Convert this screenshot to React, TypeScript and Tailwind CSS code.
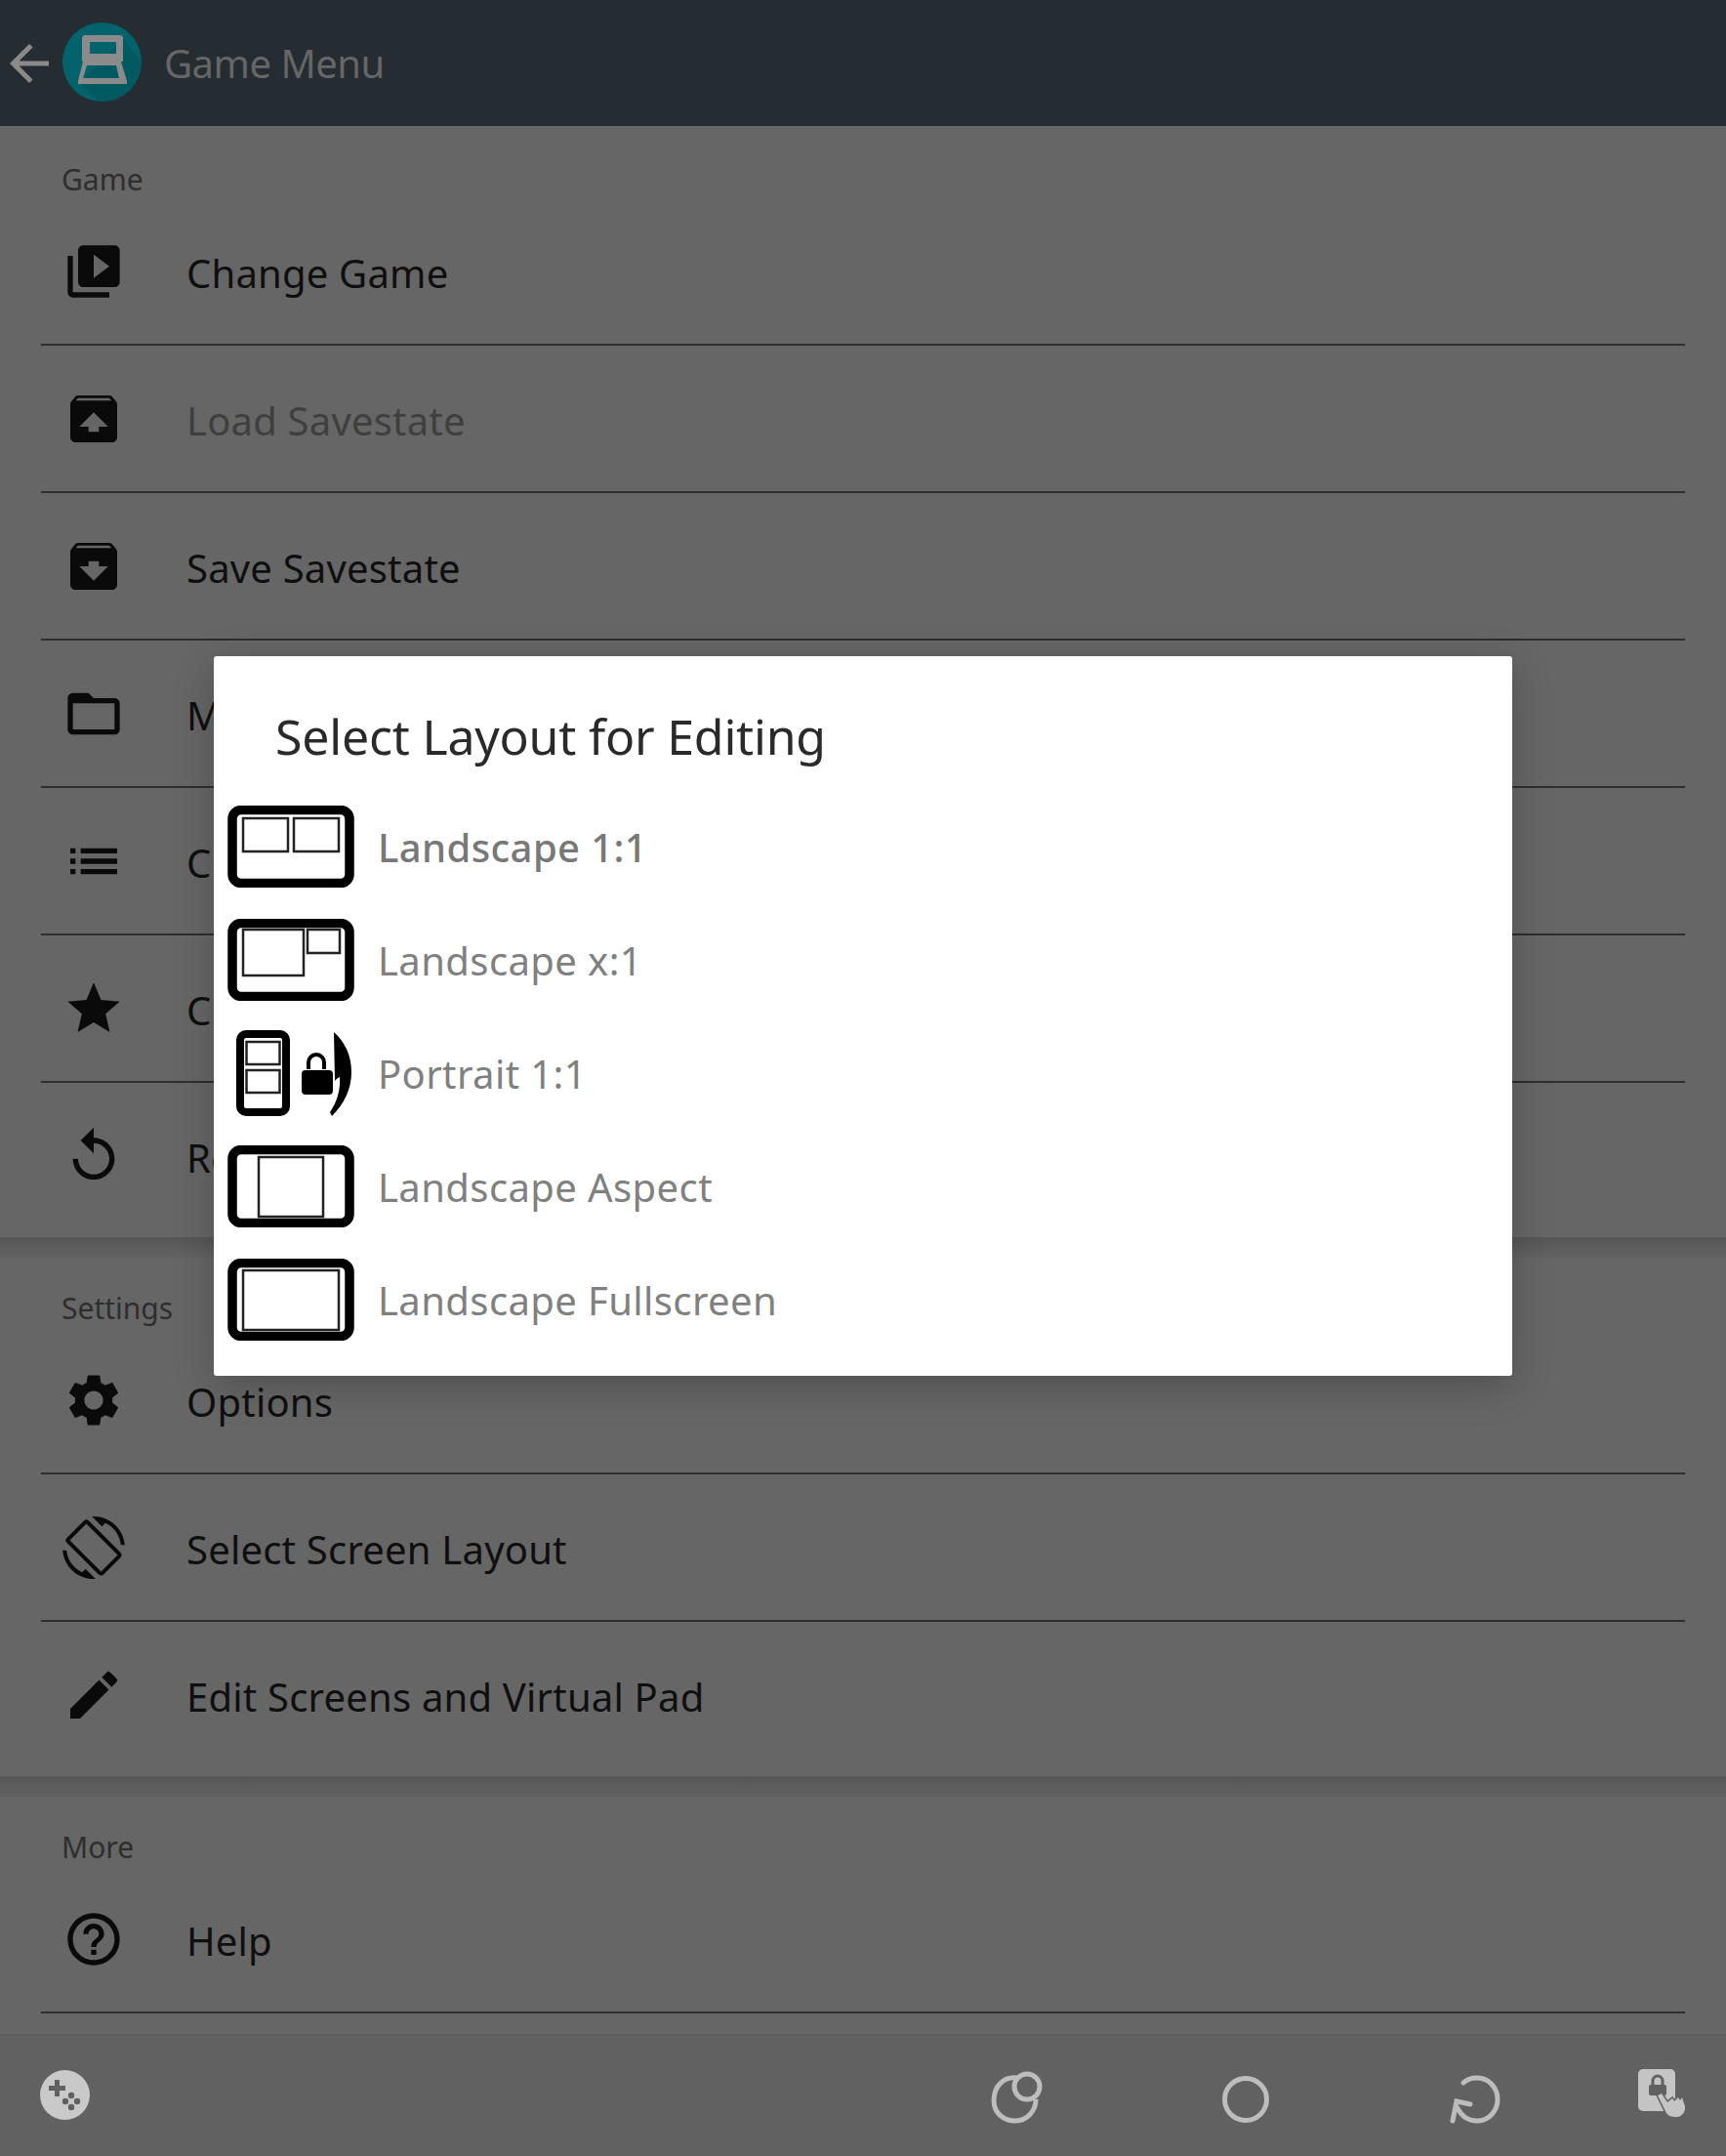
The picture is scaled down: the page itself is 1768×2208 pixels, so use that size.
import { ReactNode } from "react";
import {
  MdArchive,
  MdArrowBack,
  MdEdit,
  MdFolderOpen,
  MdHelpOutline,
  MdList,
  MdReplay,
  MdScreenRotation,
  MdSettings,
  MdStar,
  MdUnarchive,
  MdVideoLibrary,
} from "react-icons/md";

type RowProps = { icon: ReactNode; label: string; disabled?: boolean; last?: boolean };

const Row = ({ icon, label, disabled, last }: RowProps) => (
  <div className={`mx-[42px] ${last ? "h-[150px]" : "h-[151px] border-b-2 border-[#2e2e2e]"}`}>
    <div className="flex h-[150px] items-center">
      <div className="flex w-[149px] pl-[22px]">{icon}</div>
      <span
        className={`pt-[3px] text-[40px] tracking-[0.2px] ${disabled ? "text-[#3f3f3f]" : "text-[#0f0f0f]"}`}
      >
        {label}
      </span>
    </div>
  </div>
);

const SectionLabel = ({ text, short }: { text: string; short?: boolean }) => (
  <div
    className={`flex items-end pl-[63px] text-[30px] leading-[38px] text-[#2e2e2e] ${short ? "h-[71px]" : "h-[74px]"}`}
  >
    {text}
  </div>
);

const Gap = () => <div className="h-[21px] bg-gradient-to-b from-[#565656] to-[#636363]" />;

const iconClass = "h-16 w-16 text-[#0a0a0a]";

const gameRows: RowProps[] = [
  { icon: <MdVideoLibrary className={iconClass} />, label: "Change Game" },
  { icon: <MdUnarchive className={iconClass} />, label: "Load Savestate", disabled: true },
  { icon: <MdArchive className={iconClass} />, label: "Save Savestate" },
  { icon: <MdFolderOpen className={iconClass} />, label: "Manage Savestates" },
  { icon: <MdList className={iconClass} />, label: "Cheats" },
  { icon: <MdStar className={iconClass} />, label: "Close Game" },
  { icon: <MdReplay className={iconClass} />, label: "Reset", last: true },
];

const settingsRows: RowProps[] = [
  { icon: <MdSettings className={iconClass} />, label: "Options" },
  { icon: <MdScreenRotation className={iconClass} />, label: "Select Screen Layout" },
  { icon: <MdEdit className={iconClass} />, label: "Edit Screens and Virtual Pad", last: true },
];

// outer tablet frame shared by the landscape layouts
const Frame = ({ children }: { children: ReactNode }) => (
  <svg width="130" height="84" viewBox="0 0 130 84" fill="none" stroke="#000">
    <rect x="5" y="4.5" width="120" height="75" rx="9" strokeWidth="9.5" />
    <g strokeWidth="2.5" stroke="#222">{children}</g>
  </svg>
);

const layouts: { label: string; bold?: boolean; icon: ReactNode }[] = [
  {
    label: "Landscape 1:1",
    bold: true,
    icon: (
      <Frame>
        <rect x="16" y="13" width="46" height="34" />
        <rect x="68" y="13" width="46" height="34" />
      </Frame>
    ),
  },
  {
    label: "Landscape x:1",
    icon: (
      <Frame>
        <rect x="16" y="11" width="62" height="47" />
        <rect x="82" y="11" width="33" height="24" />
      </Frame>
    ),
  },
  {
    label: "Portrait 1:1",
    icon: (
      <svg width="130" height="88" viewBox="0 0 130 88" fill="none" stroke="#000">
        <rect x="13" y="4" width="47" height="80" rx="6" strokeWidth="8" />
        <rect x="19.5" y="12" width="34" height="23" strokeWidth="2.5" stroke="#222" />
        <rect x="19.5" y="41" width="34" height="23" strokeWidth="2.5" stroke="#222" />
        <path d="M83 40v-7a8 8 0 0 1 16 0v7" strokeWidth="4" />
        <rect x="76" y="41" width="32" height="25" rx="4" fill="#000" stroke="none" />
        <path
          d="M109 2c10 9 18 22 18 41 0 18-8 33-20 45l-2-4c7-10 11-23 10-36-2 1-4 2-5 4z"
          fill="#000"
          stroke="none"
        />
      </svg>
    ),
  },
  {
    label: "Landscape Aspect",
    icon: (
      <Frame>
        <rect x="32" y="12" width="66" height="61" />
      </Frame>
    ),
  },
  {
    label: "Landscape Fullscreen",
    icon: (
      <Frame>
        <rect x="16" y="12" width="98" height="61" />
      </Frame>
    ),
  },
];

const DsLogo = () => (
  <svg width="81" height="81" viewBox="0 0 81 81" className="shrink-0">
    <circle cx="40.5" cy="40.5" r="40.5" fill="#02636c" />
    <path d="M40.5 81a40.5 40.5 0 0 0 40.5-40.5L62 16 18 62l19 19z" fill="#015a62" />
    <path fillRule="evenodd" d="M22 13h38l2 2v25H20V15zm6 7v12h27V20z" fill="#8b8b8b" />
    <path fillRule="evenodd" d="M21 40h39l6 20v3H16v-3zm4 4-4 13h37l-3-13z" fill="#8b8b8b" />
  </svg>
);

const GamepadIcon = () => (
  <svg width="51" height="51" viewBox="0 0 51 51">
    <circle cx="25.5" cy="25.5" r="25.5" fill="#c9c9c9" />
    <path d="M15 10h5v6h6v5h-6v6h-5v-6H9v-5h6z" fill="#616161" />
    <circle cx="32" cy="26" r="3.2" fill="#616161" />
    <circle cx="26" cy="32" r="3.2" fill="#616161" />
    <circle cx="38" cy="32" r="3.2" fill="#616161" />
    <circle cx="32" cy="38" r="3.2" fill="#616161" />
  </svg>
);

const barStroke = { fill: "none", stroke: "#bdbdbd", strokeWidth: 5 };

const BottomBar = () => (
  <div className="flex h-[125px] items-start bg-[#616161] pl-[41px] pr-[42px]">
    <div className="mt-[37px]">
      <GamepadIcon />
    </div>
    <div className="ml-auto mt-[38px] flex items-start">
      <svg width="54" height="54" viewBox="0 0 54 54" {...barStroke}>
        <path d="M27 7C13 5 3 16 3 30c0 13 10 21 22 21s21-10 21-22" />
        <circle cx="37" cy="16" r="13" />
      </svg>
      <svg width="48" height="50" viewBox="0 0 48 50" className="ml-[183px] mt-[4px]" {...barStroke}>
        <circle cx="24" cy="25" r="21.5" />
      </svg>
      <svg width="52" height="50" viewBox="0 0 52 50" className="ml-[185px] mt-[4px]" {...barStroke} strokeLinecap="round">
        <path d="M14 8c4-4 9-5 14-5 12 0 21 10 21 22S40 47 28 47c-9 0-16-5-20-13" />
        <path d="M3 47l4-20 14 3" />
      </svg>
      <svg width="48" height="50" viewBox="0 0 48 50" className="ml-[141px] mt-[-2px]">
        <rect x="0" y="0" width="38" height="43" rx="5" fill="#c4c4c4" />
        <rect x="11" y="16" width="18" height="11" rx="2" fill="#616161" />
        <path d="M15 16v-4a5 5 0 0 1 10 0v4" fill="none" stroke="#616161" strokeWidth="3" />
        <path
          d="M20 27l4-2 6 9 5-4 2 3 4-4 2 3 2-3 3 9c1 5-3 11-9 11-5 0-8-1-10-4l-3-6z"
          fill="#c4c4c4"
          stroke="#616161"
          strokeWidth="3"
          paintOrder="stroke"
        />
      </svg>
    </div>
  </div>
);

export default function App() {
  return (
    <div
      className="relative flex h-[2208px] w-[1768px] flex-col overflow-hidden bg-[#666666]"
      style={{ fontFamily: '"Noto Sans", sans-serif' }}
    >
      <div className="flex h-[129px] items-center bg-[#252d33]">
        <MdArrowBack className="h-[60px] w-[60px] shrink-0 text-[#8a8a8a]" />
        <div className="ml-1 mb-[3px]">
          <DsLogo />
        </div>
        <span className="ml-[23px] text-[40px] tracking-[-0.5px] text-[#666666]">Game Menu</span>
      </div>

      <SectionLabel text="Game" />
      {gameRows.map((r) => (
        <Row key={r.label} {...r} />
      ))}
      <div className="h-2" />
      <Gap />

      <SectionLabel text="Settings" short />
      {settingsRows.map((r) => (
        <Row key={r.label} {...r} />
      ))}
      <div className="h-2" />
      <Gap />

      <SectionLabel text="More" short />
      <Row icon={<MdHelpOutline className={iconClass} />} label="Help" />
      <div className="flex-1" />
      <BottomBar />

      {/* dialog */}
      <div className="absolute left-[219px] top-[672px] h-[737px] w-[1330px] rounded-[3px] bg-white shadow-[0_10px_40px_rgba(0,0,0,0.22)]">
        <div className="flex h-[137px] items-center pl-[63px] pt-[27px] text-[50px] tracking-[-0.2px] text-[#2a2a2a]">
          Select Layout for Editing
        </div>
        {layouts.map((l) => (
          <div key={l.label} className="flex h-[116px] items-center pl-[14px]">
            <div className="flex w-[154px]">{l.icon}</div>
            <span
              className={`pt-[2px] text-[40px] tracking-[0.4px] ${l.bold ? "font-medium text-[#787878]" : "text-[#808080]"}`}
            >
              {l.label}
            </span>
          </div>
        ))}
      </div>
    </div>
  );
}
